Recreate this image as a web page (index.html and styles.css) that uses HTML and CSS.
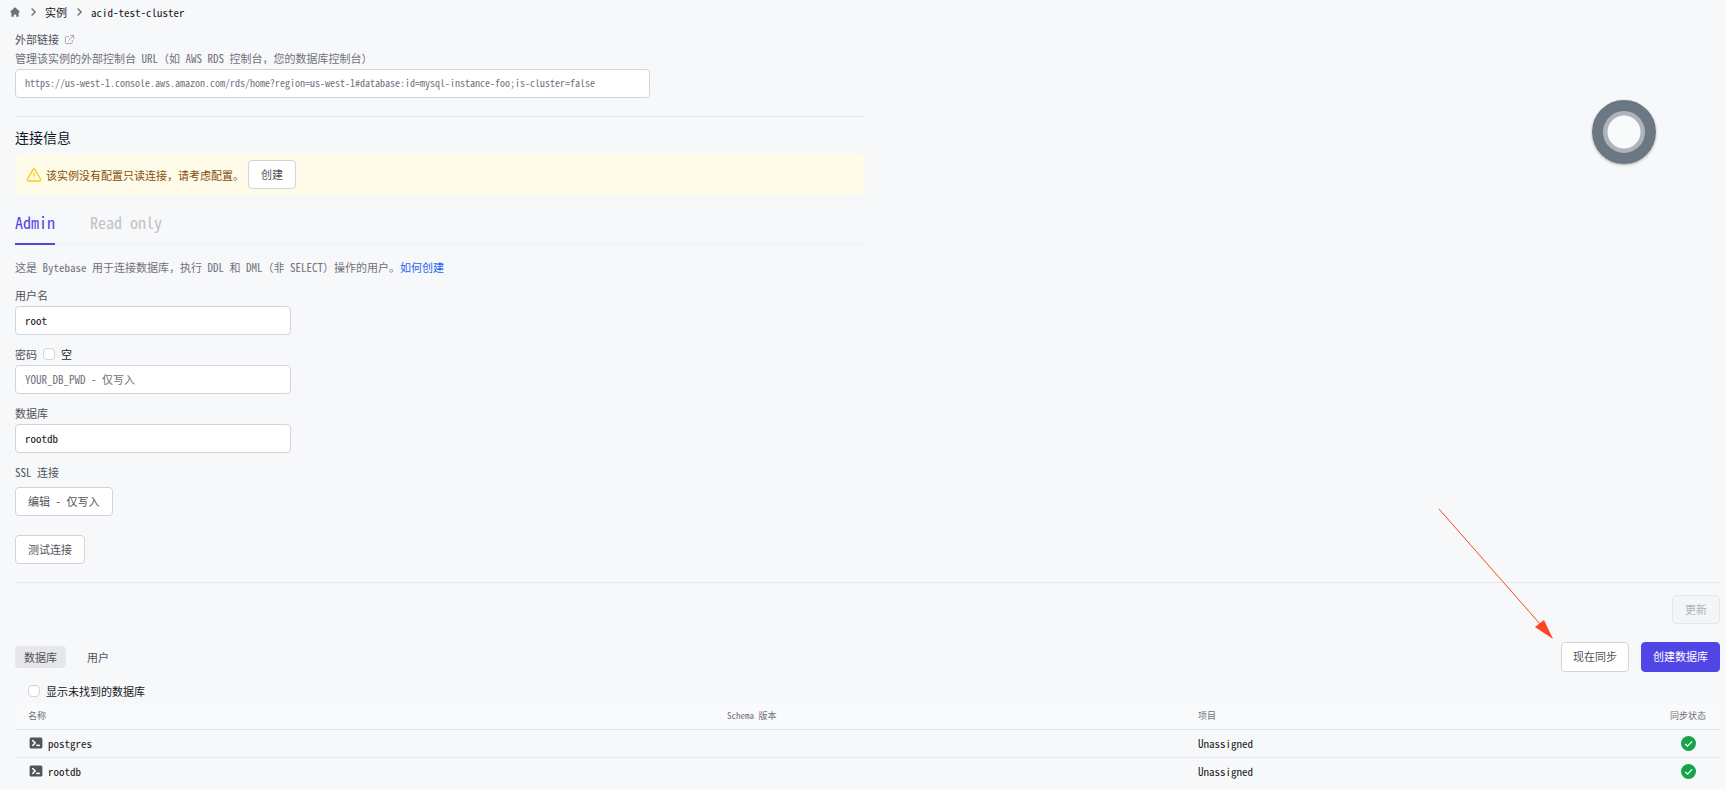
FILE: index.html
```html
<!DOCTYPE html>
<html lang="zh-CN">
<head>
    <meta charset="UTF-8">
    <meta name="viewport" content="width=device-width, initial-scale=1.0">
    <title>acid-test-cluster</title>
    <link rel="stylesheet" href="styles.css">
</head>
<body>
    <nav class="breadcrumb" aria-label="breadcrumb">
        <a href="#" aria-label="Home">
            <svg class="home" viewBox="0 0 20 20" fill="currentColor"><path d="M10.7 2.3a1 1 0 0 0-1.4 0l-7 7a1 1 0 0 0 1.4 1.4L4 10.4V17a1 1 0 0 0 1 1h2a1 1 0 0 0 1-1v-2a1 1 0 0 1 1-1h2a1 1 0 0 1 1 1v2a1 1 0 0 0 1 1h2a1 1 0 0 0 1-1v-6.6l.3.3a1 1 0 0 0 1.4-1.4z"/></svg>
        </a>
        <svg class="chevron" viewBox="0 0 20 20" fill="none" stroke="currentColor" stroke-width="2"><path d="M8 5l5 5-5 5"/></svg>
        <a href="#">实例</a>
        <svg class="chevron" viewBox="0 0 20 20" fill="none" stroke="currentColor" stroke-width="2"><path d="M8 5l5 5-5 5"/></svg>
        <span>acid-test-cluster</span>
    </nav>

    <main>
        <form class="instance">
            <section class="external">
                <div class="label-row">
                    <label for="link">外部链接</label>
                    <a class="open" href="#" aria-label="打开">
                        <svg viewBox="0 0 24 24" fill="none" stroke="currentColor" stroke-width="2" stroke-linecap="round" stroke-linejoin="round"><path d="M10 6H5a2 2 0 0 0-2 2v11a2 2 0 0 0 2 2h11a2 2 0 0 0 2-2v-5M14 3h7v7M10 14L21 3"/></svg>
                    </a>
                </div>
                <p class="hint">管理该实例的外部控制台 URL（如 AWS RDS 控制台，您的数据库控制台）</p>
                <div class="link-grid">
                    <input type="text" id="link" class="url" placeholder="https://us-west-1.console.aws.amazon.com/rds/home?region=us-west-1#database:id=mysql-instance-foo;is-cluster=false">
                </div>
            </section>

            <section class="connection">
                <h2>连接信息</h2>
                <div class="alert">
                    <svg viewBox="0 0 24 24" fill="none" stroke="currentColor" stroke-width="2" stroke-linecap="round" stroke-linejoin="round"><path d="M12 9v4m0 3h.01M4 21h16a2 2 0 0 0 1.700-3L13.700 4a2 2 0 0 0-3.400 0L2.300 18A2 2 0 0 0 4 21z"/></svg>
                    <span>该实例没有配置只读连接，请考虑配置。</span>
                    <button type="button" class="btn">创建</button>
                </div>

                <div class="tabs">
                    <button type="button" class="tab active">Admin</button>
                    <button type="button" class="tab">Read only</button>
                </div>

                <p class="hint usage">这是 Bytebase 用于连接数据库，执行 DDL 和 DML（非 SELECT）操作的用户。<a href="#">如何创建</a></p>

                <div class="fields">
                    <div class="field">
                        <label for="username">用户名</label>
                        <input type="text" id="username" value="root">
                    </div>
                    <div class="field">
                        <div class="label-row">
                            <label for="password">密码</label>
                            <input type="checkbox" id="empty">
                            <label for="empty" class="dark">空</label>
                        </div>
                        <input type="password" id="password" placeholder="YOUR_DB_PWD - 仅写入">
                    </div>
                    <div class="field">
                        <label for="database">数据库</label>
                        <input type="text" id="database" value="rootdb">
                    </div>
                    <div class="field ssl">
                        <label for="ssl">SSL 连接</label>
                        <button type="button" id="ssl" class="btn">编辑 - 仅写入</button>
                    </div>
                </div>
                <button type="button" class="btn">测试连接</button>
            </section>
        </form>

        <div class="update">
            <button type="button" class="btn" disabled>更新</button>
        </div>

        <div class="toolbar">
            <div class="pills">
                <button type="button" class="pill active">数据库</button>
                <button type="button" class="pill">用户</button>
            </div>
            <div class="actions">
                <button type="button" class="btn">现在同步</button>
                <button type="button" class="btn primary">创建数据库</button>
                <svg class="arrow" viewBox="0 0 116 132"><path d="M1 1L102 116" stroke="#ff4522" fill="none"/><path d="M115 131L97 119L106 112z" fill="#ff4522"/></svg>
            </div>
        </div>

        <div class="filter">
            <input type="checkbox" id="missing">
            <label for="missing">显示未找到的数据库</label>
        </div>

        <table>
            <thead>
                <tr>
                    <th class="col-name">名称</th>
                    <th class="col-schema">Schema 版本</th>
                    <th>项目</th>
                    <th class="col-sync">同步状态</th>
                </tr>
            </thead>
            <tbody>
                <tr>
                    <td>
                        <div class="db">
                            <svg viewBox="0 0 20 20"><path fill="#52525b" fill-rule="evenodd" d="M2 5a2 2 0 0 1 2-2h12a2 2 0 0 1 2 2v10a2 2 0 0 1-2 2H4a2 2 0 0 1-2-2zm3.300 1.300a1 1 0 0 1 1.400 0l3 3a1 1 0 0 1 0 1.400l-3 3a1 1 0 0 1-1.400-1.400L7.600 10 5.300 7.700a1 1 0 0 1 0-1.400zM11 12a1 1 0 1 0 0 2h3a1 1 0 1 0 0-2z"/></svg>
                            postgres
                        </div>
                    </td>
                    <td></td>
                    <td>Unassigned</td>
                    <td class="col-sync"><svg class="ok" viewBox="0 0 16 16"><circle cx="8" cy="8" r="8" fill="#16a34a"/><path d="M4.500 8.500l2.500 2.300 4.800-5" fill="none" stroke="#fff" stroke-width="1.300"/></svg></td>
                </tr>
                <tr>
                    <td>
                        <div class="db">
                            <svg viewBox="0 0 20 20"><path fill="#52525b" fill-rule="evenodd" d="M2 5a2 2 0 0 1 2-2h12a2 2 0 0 1 2 2v10a2 2 0 0 1-2 2H4a2 2 0 0 1-2-2zm3.300 1.300a1 1 0 0 1 1.400 0l3 3a1 1 0 0 1 0 1.400l-3 3a1 1 0 0 1-1.400-1.400L7.600 10 5.300 7.700a1 1 0 0 1 0-1.400zM11 12a1 1 0 1 0 0 2h3a1 1 0 1 0 0-2z"/></svg>
                            rootdb
                        </div>
                    </td>
                    <td></td>
                    <td>Unassigned</td>
                    <td class="col-sync"><svg class="ok" viewBox="0 0 16 16"><circle cx="8" cy="8" r="8" fill="#16a34a"/><path d="M4.500 8.500l2.500 2.300 4.800-5" fill="none" stroke="#fff" stroke-width="1.300"/></svg></td>
                </tr>
            </tbody>
        </table>
    </main>

    <button type="button" class="assist" aria-label="Assist"></button>
</body>
</html>
```
FILE: styles.css
```css
* {
    box-sizing: border-box;
}
body {
    margin: 0;
    background: #f7f8fa;
    color: #18181b;
    font-family: "Noto Sans Mono CJK SC", "Noto Sans CJK SC", monospace;
    font-size: 11px;
    line-height: 16px;
}
h2, p {
    margin: 0;
}
svg {
    display: block;
    flex: none;
}
a {
    color: inherit;
    text-decoration: none;
}
input, button {
    font: inherit;
    color: inherit;
}
.breadcrumb {
    display: flex;
    align-items: center;
    gap: 5px;
    height: 23px;
    padding: 0 9px;
}
.home {
    width: 12px;
    height: 12px;
    color: #71717a;
}
.chevron {
    width: 14px;
    height: 14px;
    color: #71717a;
}
main {
    padding: 8px 5px 0 15px;
}
.instance {
    border-bottom: 1px solid #e5e7eb;
    padding-bottom: 18px;
}
.external, .connection {
    width: 50%;
    padding-right: 3px;
}
.label-row {
    display: flex;
    align-items: center;
    gap: 5px;
}
label {
    color: #52525b;
}
.dark, .filter label {
    color: #18181b;
}
.open svg {
    width: 11px;
    height: 11px;
    color: #a1a1aa;
}
.hint {
    color: #71717a;
    padding: 3px 0;
}
.link-grid {
    display: grid;
    grid-template-columns: 3fr 1fr;
    gap: 3px;
    padding-bottom: 18px;
    border-bottom: 1px solid #e5e7eb;
}
input[type="text"], input[type="password"] {
    display: block;
    width: 100%;
    height: 29px;
    padding: 0 9px 2px;
    border: 1px solid #d1d5db;
    border-radius: 4px;
    background: #fff;
}
input.url {
    font-size: 10px;
}
input::placeholder {
    color: #71717a;
    opacity: 1;
}
input[type="checkbox"] {
    appearance: none;
    width: 12px;
    height: 12px;
    margin: 0 1px;
    border: 1px solid #d1d5db;
    border-radius: 4px;
    background: #fff;
}
h2 {
    font-size: 14px;
    font-weight: 400;
    line-height: 20px;
    padding: 10px 0 7px;
    color: #111827;
}
.alert {
    display: flex;
    align-items: center;
    gap: 4px;
    padding: 6px 11px;
    border-radius: 5px;
    background: #fefce8;
    color: #854d0e;
}
.alert svg {
    width: 16px;
    height: 16px;
    color: #facc15;
}
.btn {
    height: 29px;
    padding: 0 12px 2px;
    border: 1px solid #d1d5db;
    border-radius: 4px;
    background: #fff;
    color: #52525b;
    white-space: nowrap;
}
.btn:disabled {
    background: #f4f5f7;
    border-color: #e5e7eb;
    color: #b0b3b8;
}
.btn.primary {
    border-color: #4f46e5;
    background: #4f46e5;
    color: #fff;
}
.tabs {
    display: flex;
    gap: 35px;
    margin-top: 14px;
    border-bottom: 1px solid #eff0f3;
}
.tab {
    height: 36px;
    margin-bottom: -1px;
    padding: 0 0 8px;
    border: 0;
    border-bottom: 2px solid transparent;
    background: none;
    color: #c2c2c2;
    font-size: 16px;
}
.tab.active {
    border-color: #4f46e5;
    color: #4f46e5;
}
.usage {
    margin: 11px 0 9px;
}
.usage a {
    color: #2563eb;
}
.fields {
    display: grid;
    grid-template-columns: 1fr;
    gap: 11px;
    width: 276px;
    margin-bottom: 19px;
}
.field > label, .field > .label-row {
    display: flex;
    height: 16px;
    margin-bottom: 3px;
}
.field.ssl > label {
    margin-bottom: 7px;
}
.update {
    display: flex;
    justify-content: flex-end;
    padding: 12px 0 18px;
}
.toolbar, .pills, .actions {
    display: flex;
    align-items: center;
}
.toolbar {
    justify-content: space-between;
}
.pills, .actions {
    gap: 12px;
}
.actions {
    position: relative;
}
.actions .btn {
    height: 30px;
    padding: 0 11px 2px;
}
.pill {
    height: 22px;
    padding: 0 9px;
    border: 0;
    border-radius: 4px;
    background: none;
    color: #52525b;
}
.pill.active {
    background: #e5e7eb;
}
.arrow {
    position: absolute;
    right: 166px;
    bottom: 32px;
    width: 116px;
    height: 132px;
    pointer-events: none;
}
.filter {
    display: flex;
    align-items: center;
    gap: 5px;
    padding: 11px 12px 5px;
}
table {
    width: 100%;
    border-collapse: collapse;
    table-layout: fixed;
}
th {
    height: 25px;
    padding: 0 13px;
    background: #f9fafb;
    color: #71717a;
    font-size: 9px;
    font-weight: 400;
    text-align: left;
}
td {
    height: 28px;
    padding: 0 13px;
}
tr {
    border-bottom: 1px solid #e5e7eb;
}
tbody tr:last-child {
    border-bottom: 0;
}
.col-name {
    width: 41%;
}
.col-schema {
    width: calc(28% - 6px);
}
.col-sync {
    width: 64px;
    padding: 0;
    text-align: center;
}
.db {
    display: flex;
    align-items: center;
    gap: 4px;
}
.db svg {
    width: 16px;
    height: 16px;
}
.ok {
    width: 15px;
    height: 15px;
    margin: 0 auto;
}
.assist {
    position: fixed;
    top: 100px;
    right: 69px;
    width: 64px;
    height: 64px;
    border: 11px solid #6c7784;
    border-radius: 50%;
    background: radial-gradient(circle, #f9fafa 16px, #adb4bc 17px);
    box-shadow: 0 1px 3px rgba(0, 0, 0, 0.3);
}
```
